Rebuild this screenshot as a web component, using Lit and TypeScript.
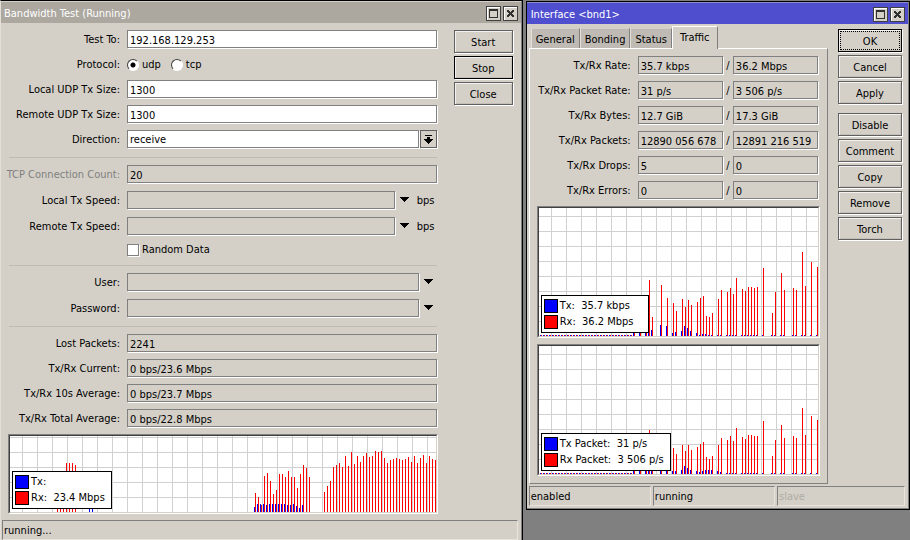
import { LitElement, html, svg, css } from "lit";
import { customElement, property } from "lit/decorators.js";

/** One sample: [slot counted from the right edge, height in pixels]. */
type Sample = [number, number];

interface Series {
  label: string;
  value: string;
  samples: Sample[];
}

const run = (first: number, heights: number[]): Sample[] =>
  heights.map((h, i): Sample => [first + i, h]).filter(([, h]) => h > 0);

const testRx: Sample[] = [
  ...run(0, [52, 53, 56, 49, 57, 54, 49, 56, 50, 55, 53, 52, 53, 54, 53, 52, 49, 54, 61, 60, 61, 56, 55, 59, 56, 50, 56, 48, 60, 46, 56, 45, 49, 47, 45, 31, 26, 20]),
  ...run(42, [35, 44, 47, 38, 24, 35, 35, 41, 35, 38, 38, 22, 18, 31, 39, 36, 7, 15, 19]),
  ...run(120, [47, 49, 49, 49, 20, 12, 5]),
];
const testTx: Sample[] = [
  ...run(44, [7, 4, 6, 8, 7, 7, 8, 8, 8, 8, 8, 8, 7, 8, 8, 8, 5]),
  ...run(114, [5, 4]),
];

const idle = (h: number): Sample[] => run(62, Array.from({ length: 31 }, () => h));

const rateRx: Sample[] = [
  ...run(0, [69, 0, 74, 0, 50, 84, 0, 46, 48, 0, 0, 46, 63, 0, 44, 23, 0, 0, 68, 0]),
  ...run(20, [49, 48, 49, 49, 45, 47, 0, 58, 42, 48, 44, 0, 46, 37, 0, 23, 19, 20, 40, 38]),
  ...run(40, [34, 0, 31, 36, 29, 37, 0, 25, 33, 0, 38, 0, 51, 0, 0, 19, 56, 5, 0, 5, 0, 4]),
  ...idle(1),
];
const rateTx: Sample[] = [
  ...run(0, [1, 0, 1, 0, 1, 1, 0, 1, 1, 0, 0, 1, 1, 0, 1, 1, 0, 0, 1, 0]),
  ...run(20, [1, 1, 1, 1, 1, 1, 0, 1, 1, 1, 1, 0, 1, 1, 0, 1, 1, 2, 2, 1]),
  ...run(40, [3, 0, 5, 8, 10, 5, 0, 4, 3, 0, 10, 0, 11, 0, 0, 6, 5, 4, 0, 5, 0, 4]),
  ...idle(1),
];
const packetRx: Sample[] = [
  ...run(0, [54, 0, 58, 0, 39, 66, 0, 36, 38, 0, 0, 36, 49, 0, 34, 18, 0, 0, 53, 0]),
  ...run(20, [38, 38, 39, 39, 35, 37, 0, 46, 33, 38, 34, 0, 36, 29, 0, 18, 15, 17, 32, 30]),
  ...run(40, [27, 0, 24, 29, 23, 29, 0, 20, 26, 0, 29, 0, 40, 0, 0, 15, 44, 4, 0, 4, 0, 4]),
  ...idle(1),
];
const packetTx: Sample[] = [
  ...run(0, [1, 0, 1, 0, 1, 1, 0, 1, 1, 0, 0, 1, 1, 0, 1, 1, 0, 0, 1, 0]),
  ...run(20, [1, 1, 1, 1, 1, 1, 0, 1, 1, 1, 1, 0, 2, 3, 0, 4, 4, 4, 3, 2]),
  ...run(40, [3, 0, 4, 6, 8, 4, 0, 3, 3, 0, 8, 0, 9, 0, 0, 5, 4, 4, 0, 4, 0, 4]),
  ...idle(1),
];

const base = css`
  * {
    box-sizing: border-box;
  }
  :host {
    display: block;
    font-family: "DejaVu Sans Condensed", "DejaVu Sans", Tahoma, sans-serif;
    font-size: 11px;
    line-height: 14px;
    color: #000;
  }
  button,
  input,
  select {
    font: inherit;
    color: inherit;
    margin: 0;
    border-radius: 0;
    outline: none;
  }
`;

@customElement("traffic-graph")
export class TrafficGraph extends LitElement {
  @property({ attribute: false }) tx: Series = { label: "Tx:", value: "", samples: [] };
  @property({ attribute: false }) rx: Series = { label: "Rx:", value: "", samples: [] };

  static styles = [
    base,
    css`
      :host {
        border: 1px solid;
        border-color: #808080 #fff #fff #808080;
      }
      .plot {
        position: relative;
        height: 100%;
        overflow: hidden;
        border: 1px solid;
        border-color: #404040 #d4d0c8 #d4d0c8 #404040;
        background-color: #fff;
        background-image: linear-gradient(to right, #d0d0d0 1px, transparent 1px),
          linear-gradient(to bottom, #d0d0d0 1px, transparent 1px);
        background-size: 15px 15px;
        background-position: 12px 0, 0 100%;
      }
      .bars {
        display: block;
        width: 100%;
        height: 100%;
      }
      .tx {
        fill: #00f;
        background: #00f;
      }
      .rx {
        fill: #f00;
        background: #f00;
      }
      .legend {
        position: absolute;
        left: 2px;
        bottom: 3px;
        display: grid;
        gap: 2px;
        min-width: var(--legend-width, 0);
        padding: 3px 6px 3px 2px;
        border: 1px solid #000;
        background: #fff;
        white-space: pre;
      }
      .item {
        display: flex;
        gap: 2px;
      }
      .swatch {
        width: 14px;
        height: 14px;
        border: 1px solid #000;
      }
    `,
  ];

  private bars(samples: Sample[], cls: string, shift: number) {
    return samples.map(
      ([slot, h]) => svg`<rect class=${cls} x=${-(slot * 3 + shift)} y=${-h} width="1" height=${h}></rect>`
    );
  }

  render() {
    return html`
      <div class="plot">
        <svg class="bars" shape-rendering="crispEdges" aria-hidden="true">
          <svg x="100%" y="100%" overflow="visible">
            ${this.bars(this.rx.samples, "rx", 1)} ${this.bars(this.tx.samples, "tx", 2)}
          </svg>
        </svg>
        <div class="legend">
          <div class="item"><span class="swatch tx"></span><span>${this.tx.label}  ${this.tx.value}</span></div>
          <div class="item"><span class="swatch rx"></span><span>${this.rx.label}  ${this.rx.value}</span></div>
        </div>
      </div>
    `;
  }
}

@customElement("app-root")
export class AppRoot extends LitElement {
  static styles = [
    base,
    css`
      :host {
        min-height: 100vh;
        background: #808080;
      }
      .desktop {
        display: flex;
        align-items: flex-start;
        gap: 3px;
      }
      .window {
        min-width: 0;
        background: #d4d0c8;
        border: 1px solid #000;
        box-shadow: inset -1px 0 #808080;
      }
      .test {
        flex: 523 1 0;
        border-left-color: #e4e0d8;
        border-bottom: 0;
      }
      .iface {
        flex: 384 1 0;
        margin-top: 1px;
        box-shadow: inset -1px -1px #808080;
      }
      .title {
        display: flex;
        align-items: center;
        gap: 2px;
        height: 22px;
        margin-right: 1px;
        padding: 1px 3px 0;
        border-top: 1px solid #d4d0c8;
        background: #aca8a0;
        color: #fff;
      }
      .iface .title {
        padding-left: 4px;
        border-top-color: #8c8cc8;
        background: #4e4ecf;
      }
      .title h1 {
        flex: 1;
        margin: 0;
        padding-top: 2px;
        font-size: 11px;
        font-weight: normal;
        white-space: nowrap;
      }
      .tool {
        display: block;
        width: 15px;
        height: 15px;
        padding: 0;
        border: 1px solid #404040;
        background: #d4d0c8;
        box-shadow: inset 1px 1px #fff;
      }
      .glyph {
        display: block;
      }
      .content {
        display: flex;
        align-items: flex-start;
      }
      .test .content {
        gap: 16px;
        padding: 7px 9px 6px 7px;
      }
      .iface .content {
        gap: 10px;
        padding: 2px 7px 2px 2px;
      }
      .main {
        flex: 1;
        min-width: 0;
      }
      .rows {
        display: grid;
        gap: 7px;
        padding-right: 1px;
      }
      .rows.loose {
        gap: 8px;
      }
      .row {
        display: flex;
        align-items: center;
        gap: 7px;
        height: 18px;
      }
      .name {
        flex: none;
        display: flex;
        justify-content: flex-end;
        width: 112px;
        padding-top: 2px;
        white-space: nowrap;
      }
      .dim {
        color: #808080;
      }
      .entry {
        flex: 1;
        min-width: 0;
        width: 100%;
        height: 18px;
        padding: 2px 2px 0;
        border: 1px solid #808080;
        background: #fff;
        box-shadow: 1px 1px #fff;
        appearance: none;
      }
      .entry.flat {
        background: #d4d0c8;
      }
      .combo {
        flex: 1;
        min-width: 0;
        display: flex;
        align-items: center;
        gap: 1px;
      }
      .drop {
        display: block;
        padding: 0;
        border: 0;
        background: none;
      }
      .drop.boxed {
        width: 17px;
        height: 18px;
        border: 1px solid #606060;
        box-shadow: 1px 1px #fff;
      }
      .drop.bare {
        width: 17px;
        height: 14px;
        padding: 0 4px;
      }
      .unit {
        width: 23px;
        padding: 2px 0 0 3px;
      }
      .choice {
        display: flex;
        align-items: center;
        gap: 3px;
      }
      .choices {
        display: flex;
        gap: 10px;
        padding-top: 2px;
      }
      .radio {
        width: 12px;
        height: 12px;
        border: 1px solid;
        border-color: #404040 #fff #fff #404040;
        border-radius: 50%;
        background: #fff;
        appearance: none;
      }
      .radio:checked {
        background: radial-gradient(circle, #000 2px, #fff 3px);
      }
      .check {
        width: 12px;
        height: 12px;
        border: 1px solid #808080;
        background: #fff;
        box-shadow: 1px 1px #fff;
        appearance: none;
      }
      .random {
        height: 13px;
        padding-left: 119px;
      }
      .rule {
        height: 1px;
        margin: 9px 1px 7px;
        border: 0;
        background: #bfbbb4;
      }
      .test-graph {
        height: 80px;
        margin-top: 7px;
      }
      .actions {
        flex: none;
        display: grid;
        gap: 3px;
        width: 59px;
      }
      .iface .actions {
        width: 64px;
        padding-top: 3px;
      }
      .group {
        display: grid;
        gap: 3px;
      }
      .group + .group {
        margin-top: 6px;
      }
      .action {
        height: 23px;
        padding: 2px 0 0;
        border: 1px solid #606060;
        background: #d4d0c8;
        box-shadow: inset 1px 1px #f4f2ee, inset -1px -1px #c4c0b8, 1px 1px #fff;
      }
      .action.strong {
        border-color: #000;
      }
      .action.focus {
        outline: 1px dotted #000;
        outline-offset: -3px;
      }
      .status {
        display: flex;
        gap: 2px;
        margin: 0 4px 0 1px;
      }
      .iface .status {
        margin: 0 4px 3px 2px;
      }
      .cell {
        flex: 1 1 0;
        height: 20px;
        padding: 3px 1px 1px;
        border: 1px solid;
        border-color: #808080 #e8e4dc #e8e4dc #808080;
      }
      .cell.off {
        flex-grow: 1.05;
        color: #b0aca4;
      }
      .tabs {
        display: flex;
        align-items: flex-end;
        padding: 0 2px;
      }
      .tab {
        height: 20px;
        padding: 2px 4px 0;
        border: 1px solid;
        border-color: #d4d0c8 #808080 #808080 #e4e0d8;
        border-bottom: 0;
        background: #bfbbb4;
        white-space: nowrap;
      }
      .tab.on {
        position: relative;
        z-index: 1;
        height: 23px;
        margin-bottom: -1px;
        padding: 0 7px 1px;
        border-color: #fff #808080 #fff #fff;
        background: #d4d0c8;
      }
      .panel {
        padding: 7px;
        border: 1px solid;
        border-color: #fff #808080 #808080 #fff;
      }
      .panel .rows {
        padding-right: 2px;
      }
      .panel .name {
        width: 94px;
      }
      .pair {
        flex: 1;
        min-width: 0;
        display: flex;
        align-items: center;
      }
      .slash {
        flex: none;
        width: 10px;
        padding-top: 2px;
        text-align: center;
      }
      .panel-graph {
        --legend-width: 108px;
        height: 132px;
        margin-top: 7px;
      }
      .panel-graph + .panel-graph {
        margin-top: 6px;
      }
    `,
  ];

  private arrow() {
    return html`<svg class="glyph" width="9" height="12" shape-rendering="crispEdges" aria-hidden="true">
      <path d="M0 3h9v1h-1v1h-1v1h-1v1h-1v1h-1v-1h-1v-1h-1v-1h-1v-1h-1z"></path>
    </svg>`;
  }

  private titleBar(text: string) {
    return html`<header class="title">
      <h1>${text}</h1>
      <button class="tool" aria-label="Maximize">
        <svg class="glyph" width="13" height="13" shape-rendering="crispEdges">
          <path fill="#303030" fill-rule="evenodd" d="M2 2h9v9H2zM3 4v6h7V4z"></path>
        </svg>
      </button>
      <button class="tool" aria-label="Close window">
        <svg class="glyph" width="13" height="13" shape-rendering="crispEdges">
          <path fill="#303030" d="M3 3h2v1h1v1h1V4h1V3h2v2H9v1H8v1h1v1h1v2H8V9H7V8H6v1H5v1H3V8h1V7h1V6H4V5H3z"></path>
        </svg>
      </button>
    </header>`;
  }

  private field(id: string, label: string, value: string, flat = false, dim = false) {
    return html`<div class="row">
      <label class="name ${dim ? "dim" : ""}" for=${id}>${label}</label>
      <input class="entry ${flat ? "flat" : ""}" id=${id} .value=${value} ?readonly=${flat} />
    </div>`;
  }

  private dropField(id: string, label: string, unit = "") {
    return html`<div class="row">
      <label class="name" for=${id}>${label}</label>
      <div class="combo">
        <input class="entry flat" id=${id} />
        <button class="drop bare" aria-label="Show ${label}">${this.arrow()}</button>
        ${unit ? html`<span class="unit">${unit}</span>` : ""}
      </div>
    </div>`;
  }

  private pair(id: string, label: string, tx: string, rx: string) {
    return html`<div class="row">
      <label class="name" for=${id}>${label}</label>
      <div class="pair">
        <input class="entry flat" id=${id} .value=${tx} readonly />
        <span class="slash">/</span>
        <input class="entry flat" aria-label="${label} received" .value=${rx} readonly />
      </div>
    </div>`;
  }

  private buttons(names: string[], strong = "", focus = "") {
    return names.map(
      (n) => html`<button class="action ${n === strong ? "strong" : ""} ${n === focus ? "focus" : ""}">${n}</button>`
    );
  }

  private bandwidthTest() {
    return html`<section class="window test">
      ${this.titleBar("Bandwidth Test (Running)")}
      <div class="content">
        <div class="main">
          <div class="rows">
            ${this.field("to", "Test To:", "192.168.129.253")}
            <div class="row">
              <span class="name">Protocol:</span>
              <div class="choices">
                <label class="choice"><input class="radio" type="radio" name="protocol" checked />udp</label>
                <label class="choice"><input class="radio" type="radio" name="protocol" />tcp</label>
              </div>
            </div>
            ${this.field("local-size", "Local UDP Tx Size:", "1300")}
            ${this.field("remote-size", "Remote UDP Tx Size:", "1300")}
            <div class="row">
              <label class="name" for="direction">Direction:</label>
              <div class="combo">
                <select class="entry" id="direction">
                  <option selected>receive</option>
                  <option>send</option>
                  <option>both</option>
                </select>
                <button class="drop boxed" aria-label="Show directions">
                  <svg class="glyph" width="15" height="16" shape-rendering="crispEdges">
                    <path d="M4 4h7v1H4zM6 6h3v2h3v1h-1v1h-1v1H9v1H8v1H7v-1H6v-1H5v-1H4V9H3V8h3z"></path>
                  </svg>
                </button>
              </div>
            </div>
          </div>
          <hr class="rule" />
          <div class="rows loose">
            ${this.field("tcp-count", "TCP Connection Count:", "20", true, true)}
            ${this.dropField("local-speed", "Local Tx Speed:", "bps")}
            ${this.dropField("remote-speed", "Remote Tx Speed:", "bps")}
            <label class="choice random"><input class="check" type="checkbox" />Random Data</label>
          </div>
          <hr class="rule" />
          <div class="rows loose">${this.dropField("user", "User:")} ${this.dropField("password", "Password:")}</div>
          <hr class="rule" />
          <div class="rows">
            ${this.field("lost", "Lost Packets:", "2241", true)}
            ${this.field("current", "Tx/Rx Current:", "0 bps/23.6 Mbps", true)}
            ${this.field("average", "Tx/Rx 10s Average:", "0 bps/23.7 Mbps", true)}
            ${this.field("total", "Tx/Rx Total Average:", "0 bps/22.8 Mbps", true)}
          </div>
          <traffic-graph
            class="test-graph"
            .tx=${{ label: "Tx:", value: "", samples: testTx }}
            .rx=${{ label: "Rx:", value: "23.4 Mbps", samples: testRx }}
          ></traffic-graph>
        </div>
        <div class="actions">${this.buttons(["Start", "Stop", "Close"], "Stop")}</div>
      </div>
      <footer class="status"><span class="cell">running...</span></footer>
    </section>`;
  }

  private interfaceWindow() {
    return html`<section class="window iface">
      ${this.titleBar("Interface <bnd1>")}
      <div class="content">
        <div class="main">
          <div class="tabs" role="tablist">
            ${["General", "Bonding", "Status", "Traffic"].map(
              (t) => html`<button class="tab ${t === "Traffic" ? "on" : ""}" role="tab">${t}</button>`
            )}
          </div>
          <div class="panel">
            <div class="rows">
              ${this.pair("rate", "Tx/Rx Rate:", "35.7 kbps", "36.2 Mbps")}
              ${this.pair("packet-rate", "Tx/Rx Packet Rate:", "31 p/s", "3 506 p/s")}
              ${this.pair("bytes", "Tx/Rx Bytes:", "12.7 GiB", "17.3 GiB")}
              ${this.pair("packets", "Tx/Rx Packets:", "12890 056 678", "12891 216 519")}
              ${this.pair("drops", "Tx/Rx Drops:", "5", "0")}
              ${this.pair("errors", "Tx/Rx Errors:", "0", "0")}
            </div>
            <traffic-graph
              class="panel-graph"
              .tx=${{ label: "Tx:", value: "35.7 kbps", samples: rateTx }}
              .rx=${{ label: "Rx:", value: "36.2 Mbps", samples: rateRx }}
            ></traffic-graph>
            <traffic-graph
              class="panel-graph"
              .tx=${{ label: "Tx Packet:", value: "31 p/s", samples: packetTx }}
              .rx=${{ label: "Rx Packet:", value: "3 506 p/s", samples: packetRx }}
            ></traffic-graph>
          </div>
        </div>
        <div class="actions">
          <div class="group">${this.buttons(["OK", "Cancel", "Apply"], "OK", "OK")}</div>
          <div class="group">${this.buttons(["Disable", "Comment", "Copy", "Remove", "Torch"])}</div>
        </div>
      </div>
      <footer class="status">
        <span class="cell">enabled</span><span class="cell">running</span><span class="cell off">slave</span>
      </footer>
    </section>`;
  }

  render() {
    return html`<main class="desktop">${this.bandwidthTest()} ${this.interfaceWindow()}</main>`;
  }
}
